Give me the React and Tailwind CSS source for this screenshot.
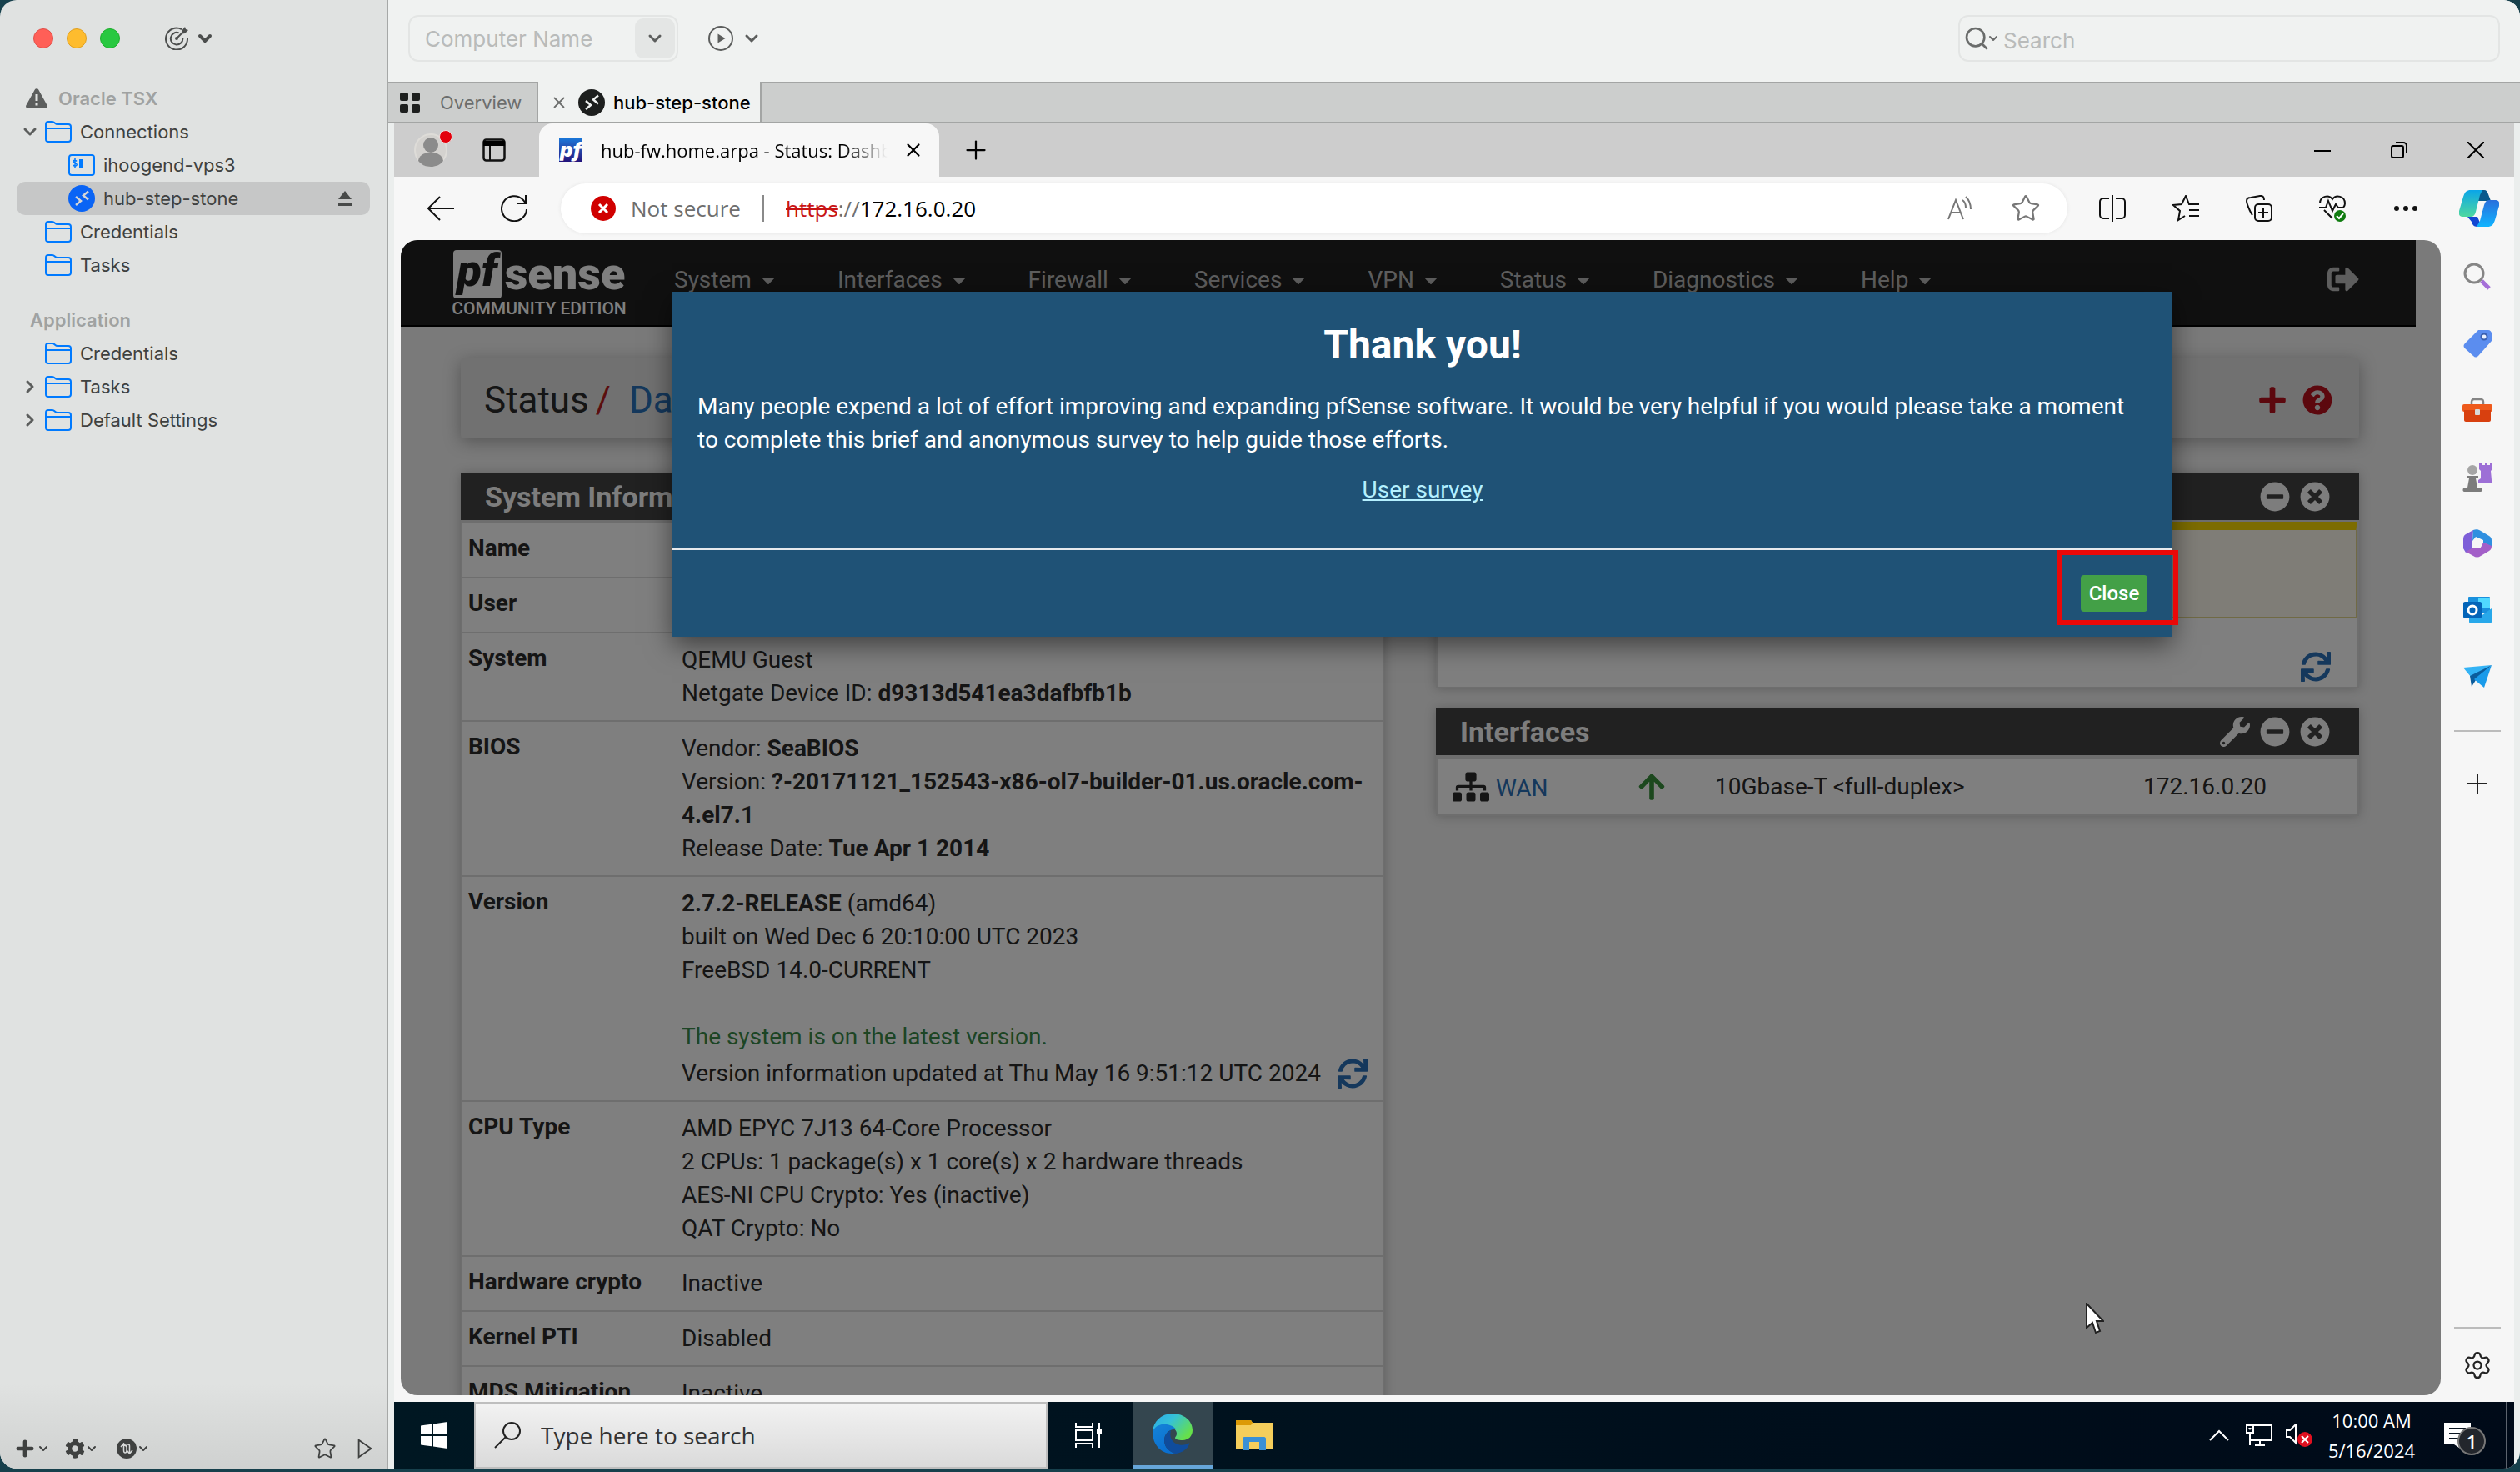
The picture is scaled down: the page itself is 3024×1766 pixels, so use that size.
import { useState } from 'react';
import {
  FaArrowUp,
  FaCaretDown,
  FaCog,
  FaMinusCircle,
  FaPlus,
  FaQuestionCircle,
  FaSignOutAlt,
  FaSitemap,
  FaSync,
  FaTimesCircle,
  FaWrench,
} from 'react-icons/fa';
import { ChevronDown, ChevronRight, Plus, Search, Settings, Star, X } from 'lucide-react';

const navItems = ['System', 'Interfaces', 'Firewall', 'Services', 'VPN', 'Status', 'Diagnostics', 'Help'];

const systemRows = [
  { label: 'Name', value: '' },
  { label: 'User', value: '' },
  {
    label: 'System',
    value: (
      <>
        QEMU Guest
        <br />
        Netgate Device ID: <b>d9313d541ea3dafbfb1b</b>
      </>
    ),
  },
  {
    label: 'BIOS',
    value: (
      <>
        Vendor: <b>SeaBIOS</b>
        <br />
        Version: <b>?-20171121_152543-x86-ol7-builder-01.us.oracle.com-4.el7.1</b>
        <br />
        Release Date: <b>Tue Apr 1 2014</b>
      </>
    ),
  },
  {
    label: 'Version',
    value: (
      <>
        <b>2.7.2-RELEASE</b> (amd64)
        <br />
        built on Wed Dec 6 20:10:00 UTC 2023
        <br />
        FreeBSD 14.0-CURRENT
        <br />
        <br />
        <span className="text-[#3a8a48]">The system is on the latest version.</span>
        <div className="flex h-11 items-center justify-between pt-1 pr-[10px]">
          <span className="whitespace-nowrap">Version information updated at Thu May 16 9:51:12 UTC 2024</span>
          <a href="#refresh" aria-label="Refresh" className="text-[#2a70b8]">
            <FaSync className="size-9" />
          </a>
        </div>
      </>
    ),
  },
  {
    label: 'CPU Type',
    value: (
      <>
        AMD EPYC 7J13 64-Core Processor
        <br />2 CPUs: 1 package(s) x 1 core(s) x 2 hardware threads
        <br />
        AES-NI CPU Crypto: Yes (inactive)
        <br />
        QAT Crypto: No
      </>
    ),
  },
  { label: 'Hardware crypto', value: 'Inactive' },
  { label: 'Kernel PTI', value: 'Disabled' },
  { label: 'MDS Mitigation', value: 'Inactive' },
];

function FolderIcon() {
  return (
    <svg viewBox="0 0 32 26" className="h-[26px] w-8" fill="none" stroke="#007aff" strokeWidth="2">
      <path d="M1 22V4a3 3 0 0 1 3-3h5c1.500 0 2 .8 3 1.700S13.500 4 15 4h13a3 3 0 0 1 3 3v15a3 3 0 0 1-3 3H4a3 3 0 0 1-3-3z" />
      <path d="M1 9h30" />
    </svg>
  );
}

function TerminalIcon() {
  return (
    <svg viewBox="0 0 32 26" className="h-[26px] w-8" fill="none" stroke="#007aff" strokeWidth="2">
      <rect x="1" y="1" width="30" height="24" rx="3" />
      <path d="M10 8.500C9 6.800 5.800 7 6 9s4 1.400 4.200 3.400S6.800 14.400 5.700 13M8 5v12" strokeWidth="1.500" />
      <path d="M13 6h5v11h-5z" fill="#007aff" stroke="none" />
    </svg>
  );
}

function RdpIcon({ circle, mark }) {
  return (
    <svg viewBox="0 0 32 32" className="size-8">
      <circle cx="16" cy="16" r="16" fill={circle} />
      <path d="M9 14l6 5-6 5M24 7.500l-6 5 6 5" fill="none" stroke={mark} strokeWidth="2.500" />
    </svg>
  );
}

function SidebarRow({ icon, label, arrow, nested, selected }) {
  return (
    <li
      className={
        selected
          ? 'mx-5 flex h-10 items-center rounded-[10px] bg-[#c6c7c7] pr-[22px] pl-2'
          : 'mx-5 flex h-10 items-center pl-2'
      }
    >
      <span className="flex w-[26px] shrink-0 text-[#5c5e5d]">
        {arrow === 'down' && <ChevronDown className="-ml-1 size-6" strokeWidth={3} />}
        {arrow === 'right' && <ChevronRight className="-ml-1 size-6" strokeWidth={3} />}
      </span>
      {nested && <span className="w-7 shrink-0" />}
      {icon}
      <span className="ml-[10px] flex-1">{label}</span>
      {selected && (
        <button aria-label="Disconnect">
          <svg viewBox="0 0 16 18" className="h-[18px] w-4" fill="#484a49">
            <path d="M8 0l8 10H0zM0 14h16v4H0z" />
          </svg>
        </button>
      )}
    </li>
  );
}

function Sidebar() {
  return (
    <aside className="flex w-[466px] shrink-0 flex-col border-r-2 border-[#a6a8a7] bg-[#e0e2e1] text-[22px] text-[#3f4140]">
      <div className="flex h-[98px] shrink-0 items-center gap-4 pb-[6px] pl-10">
        <button aria-label="Close window" className="size-6 rounded-full border border-[#e0504a] bg-[#ff5f57]" />
        <button aria-label="Minimise window" className="size-6 rounded-full border border-[#dfa023] bg-[#febc2e]" />
        <button aria-label="Zoom window" className="size-6 rounded-full border border-[#1dad2b] bg-[#28c840]" />
        <button aria-label="Activity" className="ml-[38px] flex items-center gap-2 text-[#4c4e4d]">
          <svg viewBox="0 0 28 28" className="size-7" fill="none" stroke="currentColor" strokeWidth="2">
            <path d="M20 3A13 13 0 1 0 27 14M16.500 7.300A7.300 7.300 0 1 0 21.400 14" />
            <path d="M14 14l8-8" />
            <path d="M20 5l4-5 1 3 3 1-4 4-3.500.5z" fill="currentColor" stroke="none" />
            <circle cx="14" cy="14" r="2" fill="currentColor" stroke="none" />
          </svg>
          <ChevronDown className="size-6" strokeWidth={4} />
        </button>
      </div>
      <h2 className="flex h-10 items-center gap-[13px] pl-[31px] font-semibold text-[#a0a2a1]">
        <svg viewBox="0 0 26 24" className="h-6 w-[26px]">
          <path d="M10.800 1.500a2.500 2.500 0 0 1 4.400 0l10.400 18.700a2.500 2.500 0 0 1-2.200 3.700H2.600a2.500 2.500 0 0 1-2.200-3.700z" fill="#5c5e5d" />
          <path d="M13 7v8M13 18v2.500" stroke="#e0e2e1" strokeWidth="3" />
        </svg>
        Oracle TSX
      </h2>
      <ul>
        <SidebarRow arrow="down" icon={<FolderIcon />} label="Connections" />
        <SidebarRow nested icon={<TerminalIcon />} label="ihoogend-vps3" />
        <SidebarRow nested selected icon={<RdpIcon circle="#0a64f5" mark="#d5d6d6" />} label="hub-step-stone" />
        <SidebarRow icon={<FolderIcon />} label="Credentials" />
        <SidebarRow icon={<FolderIcon />} label="Tasks" />
      </ul>
      <h2 className="mt-[26px] flex h-10 items-center pl-9 font-semibold text-[#a0a2a1]">Application</h2>
      <ul>
        <SidebarRow icon={<FolderIcon />} label="Credentials" />
        <SidebarRow arrow="right" icon={<FolderIcon />} label="Tasks" />
        <SidebarRow arrow="right" icon={<FolderIcon />} label="Default Settings" />
      </ul>
      <div className="mt-auto flex items-center bg-linear-to-b from-[#e0e2e1] to-[#cfd1d0] px-4 pt-16 pb-[10px] text-[#3f4140]">
        <button aria-label="Add" className="flex w-[62px] items-center">
          <Plus className="size-7" strokeWidth={4} />
          <ChevronDown className="size-4" strokeWidth={3} />
        </button>
        <button aria-label="Actions" className="flex w-[62px] items-center">
          <FaCog className="size-6" />
          <ChevronDown className="size-4" strokeWidth={3} />
        </button>
        <button aria-label="Sync" className="flex items-center">
          <svg viewBox="0 0 24 24" className="size-6">
            <circle cx="12" cy="12" r="12" fill="currentColor" />
            <path d="M5 10l3.500-4L12 10M8.500 6v8c0 4 3.500 4 3.500 0V9c0-3 3.500-3 3.500 0v9M12 14l3.500 4 3.500-4" fill="none" stroke="#d6d8d7" strokeWidth="1.500" />
          </svg>
          <ChevronDown className="size-4" strokeWidth={3} />
        </button>
        <button aria-label="Favourite" className="ml-auto">
          <Star className="size-7" strokeWidth={1.500} />
        </button>
        <button aria-label="Run" className="ml-5">
          <svg viewBox="0 0 20 26" className="ml-1 h-6 w-5" fill="none" stroke="currentColor" strokeWidth="2">
            <path d="M2 2l16 11L2 24z" />
          </svg>
        </button>
      </div>
    </aside>
  );
}

function Toolbar() {
  return (
    <div className="flex h-[98px] shrink-0 items-center bg-[#f0f2f1] pr-6 pb-[6px] pl-6 text-[26px]">
      <div className="flex h-14 w-[324px] items-center rounded-[12px] border-2 border-[#e3e5e4] pr-[2px]">
        <input
          aria-label="Computer Name"
          placeholder="Computer Name"
          className="w-0 flex-1 pl-[18px] outline-none placeholder:text-[#b9bbba]"
        />
        <button aria-label="Recent computers" className="flex h-12 w-12 items-center justify-center rounded-[10px] bg-[#e4e6e5]">
          <ChevronDown className="size-6 text-[#5c5e5d]" strokeWidth={3} />
        </button>
      </div>
      <button aria-label="Connect" className="ml-9 flex items-center gap-[10px] text-[#5c5e5d]">
        <svg viewBox="0 0 30 30" className="size-[30px]" fill="none" stroke="currentColor" strokeWidth="2">
          <circle cx="15" cy="15" r="14" />
          <path d="M11.500 9.500l9 5.500-9 5.500z" fill="currentColor" stroke="none" />
        </svg>
        <ChevronDown className="size-6" strokeWidth={3} />
      </button>
      <label className="ml-auto flex h-14 w-[650px] items-center rounded-[12px] border-2 border-[#e3e5e4] pl-1">
        <Search className="size-8 text-[#6a6c6b]" strokeWidth={2} />
        <ChevronDown className="-ml-1 size-4 text-[#6a6c6b]" strokeWidth={3} />
        <input aria-label="Search" placeholder="Search" className="mt-1 ml-1 flex-1 outline-none placeholder:text-[#b9bbba]" />
      </label>
    </div>
  );
}

function SessionTabs() {
  return (
    <div className="flex h-[50px] shrink-0 border-y-2 border-[#a3a5a4] bg-[#cccecd] text-[22px]">
      <button className="flex w-[180px] items-center gap-6 border-r-2 border-[#a3a5a4] pl-[14px] text-[#6c6e6d]">
        <svg viewBox="0 0 24 24" className="size-6" fill="#1d1f1e">
          <rect width="10" height="10" rx="2" />
          <rect x="14" width="10" height="10" rx="2" />
          <rect y="14" width="10" height="10" rx="2" />
          <rect x="14" y="14" width="10" height="10" rx="2" />
        </svg>
        Overview
      </button>
      <div className="-mt-[2px] flex w-[268px] items-center border-r-2 border-[#a3a5a4] bg-[#f0f2f1] pt-[2px] pl-[14px] font-medium text-black">
        <button aria-label="Close tab">
          <X className="size-[22px] text-[#6c6e6d]" strokeWidth={2} />
        </button>
        <span className="mr-[10px] ml-3">
          <RdpIcon circle="#1d1f1e" mark="#f0f2f1" />
        </span>
        hub-step-stone
      </div>
    </div>
  );
}

function BrowserTitleBar() {
  return (
    <div className="flex h-16 shrink-0 items-center bg-[#cdcdcd]">
      <button aria-label="Profile" className="relative ml-6 size-10 overflow-visible">
        <svg viewBox="0 0 40 40" className="size-10">
          <circle cx="20" cy="20" r="19" fill="#d4d2cf" stroke="#dedcd8" strokeWidth="2" />
          <circle cx="20" cy="14" r="9" fill="#8b8b8b" />
          <path d="M5 33c1-7 7-10 15-10s14 3 15 10c-4 5-9 7-15 7s-11-2-15-7z" fill="#8b8b8b" />
        </svg>
        <span className="absolute -top-1 -right-[6px] size-4 rounded-full border border-[#efe0e0] bg-[#e3000b]" />
      </button>
      <button aria-label="Tab actions" className="ml-[42px]">
        <svg viewBox="0 0 28 28" className="size-7">
          <rect x="1.500" y="1.500" width="25" height="25" rx="3" fill="none" stroke="#111" strokeWidth="2.500" />
          <path d="M1 3h26v6H1z" fill="#000" />
          <path d="M9 9v18" stroke="#111" strokeWidth="2" />
        </svg>
      </button>
      <div className="ml-10 flex h-full w-[480px] items-center rounded-t-[16px] bg-[#f7f7f7] pl-6">
        <span className="flex size-7 shrink-0 items-center justify-center bg-linear-to-b from-[#1976d8] to-[#22127c] text-[24px] leading-7 font-black text-white italic">
          pf
        </span>
        <span className="ml-[22px] w-[344px] overflow-hidden mask-r-from-85% font-['Open_Sans','Noto_Sans',sans-serif] text-[22px] whitespace-nowrap text-black">
          hub-fw.home.arpa - Status: Dashboard
        </span>
        <button aria-label="Close tab" className="ml-[18px]">
          <X className="size-[26px]" strokeWidth={2} />
        </button>
      </div>
      <button aria-label="New tab" className="ml-[26px]">
        <Plus className="size-9" strokeWidth={1.500} />
      </button>
      <div className="ml-auto flex">
        <button aria-label="Minimise" className="flex w-23 items-center justify-center">
          <svg viewBox="0 0 20 20" className="size-5" stroke="#000" strokeWidth="2">
            <path d="M0 11h20" />
          </svg>
        </button>
        <button aria-label="Restore" className="flex w-23 items-center justify-center">
          <svg viewBox="0 0 20 20" className="size-5" fill="none" stroke="#000" strokeWidth="2">
            <rect x="1" y="5" width="14" height="14" rx="2" />
            <path d="M6 1h9a4 4 0 0 1 4 4v9" />
          </svg>
        </button>
        <button aria-label="Close" className="flex w-23 items-center justify-center">
          <svg viewBox="0 0 20 20" className="size-5" stroke="#000" strokeWidth="2">
            <path d="M0 0l20 20M20 0L0 20" />
          </svg>
        </button>
      </div>
    </div>
  );
}

function AddressBar() {
  return (
    <div className="flex h-[76px] shrink-0 items-center bg-[#f7f7f7] font-['Open_Sans','Noto_Sans',sans-serif] text-[26px]">
      <button aria-label="Back" className="ml-10">
        <svg viewBox="0 0 32 32" className="size-8" fill="none" stroke="#111" strokeWidth="2">
          <path d="M15 2L1 16l14 14M1 16h31" />
        </svg>
      </button>
      <button aria-label="Reload" className="ml-14">
        <svg viewBox="0 0 32 32" className="size-8" fill="none" stroke="#111" strokeWidth="2">
          <path d="M31 17A15 15 0 1 1 27 6l3 4M30 0v10H20" />
        </svg>
      </button>
      <div className="ml-10 flex h-[60px] flex-1 items-center rounded-full bg-white pr-8 pl-9 shadow-[0_0_4px_#e4e4e4]">
        <svg viewBox="0 0 30 30" className="size-[30px] shrink-0">
          <circle cx="15" cy="15" r="15" fill="#d00000" />
          <path d="M10 10l10 10M20 10L10 20" stroke="#fff" strokeWidth="3" />
        </svg>
        <span className="ml-[18px] w-[140px] text-[#6e6e6e]">Not secure</span>
        <span className="ml-[18px] h-8 w-[2px] bg-[#8a8a8a]" />
        <span className="ml-[26px] text-black">
          <span className="text-[#c81414] line-through decoration-2">https</span>
          <span className="text-[#707070]">://</span>
          172.16.0.20
        </span>
        <div className="ml-auto flex items-center gap-[46px] text-[#777]">
          <button aria-label="Read aloud">
            <svg viewBox="0 0 30 30" className="size-[30px]" fill="none" stroke="currentColor" strokeWidth="2">
              <path d="M1 28L10 5l9 23M4 20h12M18 5c3 2 4 5 4 9M22 1c4 4 6 8 6 15" />
            </svg>
          </button>
          <button aria-label="Add to favourites">
            <Star className="size-9" strokeWidth={1.500} />
          </button>
        </div>
      </div>
      <div className="ml-[10px] -mr-[2px] flex text-[#111]">
        <button aria-label="Split screen" className="flex w-22 items-center justify-center">
          <svg viewBox="0 0 32 32" className="size-8" fill="none" stroke="currentColor" strokeWidth="2">
            <path d="M12 4H5a4 4 0 0 0-4 4v16a4 4 0 0 0 4 4h7M20 4h7a4 4 0 0 1 4 4v16a4 4 0 0 1-4 4h-7M16 0v32" />
          </svg>
        </button>
        <button aria-label="Favourites" className="flex w-22 items-center justify-center">
          <svg viewBox="0 0 32 32" className="size-8" fill="none" stroke="currentColor" strokeWidth="2">
            <path d="M23 11h-3L16 1l-5 10-10 1 8 7-2 11 8-5M21 11h11M20 18h12M20 25h12" />
          </svg>
        </button>
        <button aria-label="Collections" className="flex w-22 items-center justify-center">
          <svg viewBox="0 0 32 32" className="size-8" fill="none" stroke="currentColor" strokeWidth="2">
            <path d="M8 24C5 20 1 10 1 7s2-4 5-4l11-2c3-.5 5 1 5 5" />
            <rect x="11" y="11" width="20" height="20" rx="4" />
            <path d="M21 15v12M15 21h12" />
          </svg>
        </button>
        <button aria-label="Browser essentials" className="flex w-22 items-center justify-center">
          <svg viewBox="0 0 32 32" className="size-8" fill="none" stroke="currentColor" strokeWidth="2">
            <path d="M1 10C1 1 12-1 16 5c4-6 15-4 15 5 0 3-1 4-2 5h-6l-3-4-4 8-5-12-3 8H0M6 18l10 10" />
            <circle cx="25" cy="25" r="7" fill="#107c10" stroke="none" />
            <path d="M21 25l3 3 5-6" stroke="#fff" />
          </svg>
        </button>
        <button aria-label="More" className="flex w-22 items-center justify-center">
          <svg viewBox="0 0 28 6" className="h-[6px] w-7" fill="currentColor">
            <circle cx="3" cy="3" r="3" />
            <circle cx="14" cy="3" r="3" />
            <circle cx="25" cy="3" r="3" />
          </svg>
        </button>
        <button aria-label="Copilot" className="flex w-22 items-center justify-center">
          <svg viewBox="0 0 48 44" className="h-11 w-12">
            <defs>
              <linearGradient id="copA" x1="0" y1="0" x2="0" y2="1">
                <stop offset="0" stopColor="#0aa5e8" />
                <stop offset="1" stopColor="#4fd8a0" />
              </linearGradient>
              <linearGradient id="copB" x1="0" y1="0" x2="0" y2="1">
                <stop offset="0" stopColor="#2a6fdc" />
                <stop offset="1" stopColor="#10b4ff" />
              </linearGradient>
            </defs>
            <path d="M24 0h6c3 0 4 2 5 5l3 8h-6l-9 0z" fill="#0a5a8c" />
            <path d="M10 32h12l5 12h-4c-4 0-7-1-8-6z" fill="#1346d2" />
            <path d="M14 0h14l-3 6-5 20c-1 4-3 6-6 6H4c-3 0-5-2-4-7L5 8c2-6 4-8 9-8z" fill="url(#copA)" />
            <path d="M34 44H21l4-7 5-19c1-4 3-6 6-6h8c3 0 5 2 4 7l-5 17c-2 6-4 8-9 8z" fill="url(#copB)" />
          </svg>
        </button>
      </div>
    </div>
  );
}

function PfNavbar() {
  return (
    <nav className="flex h-[104px] items-start border-b-2 border-black bg-[#212121] pr-[68px] pl-[60px]">
      <a href="#home" className="flex w-[212px] shrink-0 flex-col items-center pt-3 text-white">
        <span className="flex items-center gap-1">
          <span className="flex h-[58px] w-[58px] items-center justify-center rounded-[4px] bg-white pb-2 text-[54px] leading-none font-black text-[#212121] italic">
            pf
          </span>
          <span className="text-[54px] leading-[58px] font-black">sense</span>
        </span>
        <span className="text-[21px] leading-6 font-medium whitespace-nowrap">COMMUNITY EDITION</span>
      </a>
      <ul className="ml-14 flex gap-[71px] pt-7 text-[#bdbdbd]">
        {navItems.map((item) => (
          <li key={item}>
            <a href={`#${item}`} className="flex items-center gap-2">
              {item}
              <FaCaretDown className="size-6" />
            </a>
          </li>
        ))}
      </ul>
      <a href="#logout" aria-label="Logout" className="ml-auto pt-7 text-[#bdbdbd]">
        <FaSignOutAlt className="size-[38px]" />
      </a>
    </nav>
  );
}

function PanelTitle({ title, config }) {
  return (
    <h2 className="flex h-14 items-center justify-end gap-3 bg-[#424242] pr-[35px] pl-[33px] text-[34px] font-bold text-[#fafafa]">
      <span className="-ml-1 flex-1">{title}</span>
      {config && (
        <button aria-label="Configure">
          <FaWrench className="size-9" />
        </button>
      )}
      <button aria-label="Collapse">
        <FaMinusCircle className="size-9" />
      </button>
      <button aria-label="Remove">
        <FaTimesCircle className="size-9" />
      </button>
    </h2>
  );
}

function SystemInformation() {
  return (
    <section className="min-w-0 flex-1 shadow-[0_0_12px_#bbb]">
      <PanelTitle title="System Information" />
      <table className="w-full table-fixed border-2 border-t-4 border-[#dcdcdc] bg-white text-left">
        <tbody>
          {systemRows.map((row) => (
            <tr key={row.label} className="border-b-2 border-[#dcdcdc] align-top">
              <th scope="row" className="w-[256px] px-[7px] pt-[10px] pb-[14px] font-bold">
                {row.label}
              </th>
              <td className="px-2 py-3">{row.value}</td>
            </tr>
          ))}
        </tbody>
      </table>
    </section>
  );
}

function InterfacesPanel() {
  return (
    <section className="shadow-[0_0_12px_#bbb]">
      <PanelTitle title="Interfaces" config />
      <table className="w-full border-2 border-t-4 border-[#dcdcdc] bg-white">
        <tbody>
          <tr>
            <td className="h-[70px] w-[220px] pl-[18px]">
              <span className="flex items-center gap-2">
                <FaSitemap className="size-11" />
                <a href="#wan" className="pt-1 text-[#2a70b8]">
                  WAN
                </a>
              </span>
            </td>
            <td className="w-[114px] pl-5">
              <FaArrowUp className="size-9 text-[#38903c]" title="up" />
            </td>
            <td>10Gbase-T &lt;full-duplex&gt;</td>
            <td className="w-[258px]">172.16.0.20</td>
          </tr>
        </tbody>
      </table>
    </section>
  );
}

function SurveyModal({ onClose }) {
  return (
    <div className="absolute inset-0 flex items-start justify-center bg-black/50 pt-[62px] pl-1">
      <div role="dialog" aria-labelledby="survey-title" className="w-full max-w-[1800px] bg-[#1f5276] text-white shadow-[0_10px_30px_rgba(0,0,0,0.5)]">
        <div className="h-[308px] px-[30px] pt-8">
          <h1 id="survey-title" className="mb-[22px] text-center text-[48px] leading-[64px] font-bold">
            Thank you!
          </h1>
          <p className="mb-5">
            Many people expend a lot of effort improving and expanding pfSense software. It would be very helpful if you
            would please take a moment to complete this brief and anonymous survey to help guide those efforts.
          </p>
          <p className="text-center">
            <a href="#survey" className="text-[#b5f0ff] underline">
              User survey
            </a>
          </p>
        </div>
        <div className="flex h-[106px] items-start justify-end border-t-2 border-[#e6e9ec] pr-[30px]">
          <span className="relative mt-[30px] flex">
            <button onClick={onClose} className="h-11 w-20 rounded-[4px] bg-[#43a047] text-2xl font-medium">
              Close
            </button>
            <span className="pointer-events-none absolute -top-[30px] -right-[37px] h-[90px] w-[145px] border-6 border-[#ea0808]" />
          </span>
        </div>
      </div>
    </div>
  );
}

function PfSensePage() {
  const [showSurvey, setShowSurvey] = useState(true);

  return (
    <main className="relative min-h-0 flex-1 overflow-hidden rounded-[20px] bg-[#f4f4f4] pr-[30px] font-[Roboto,sans-serif] text-[28px] leading-10 text-[#2b2b2b]">
      <PfNavbar />
      <div className="pr-[68px] pl-[72px]">
        <header className="mt-[38px] flex h-24 items-center rounded-[4px] bg-[#e2e2e2] px-8 pt-1 text-[44px] shadow-[0_4px_20px_#aaa]">
          <span className="-ml-1">Status</span>
          <span className="mx-2 text-[#b71c1c]">/</span>
          <a href="#dashboard" className="ml-[14px] text-[#2a70b8]">
            Dashboard
          </a>
          <span className="ml-auto flex gap-[18px] text-[#b8101c]">
            <button aria-label="Add widget">
              <FaPlus className="size-9" />
            </button>
            <button aria-label="Help">
              <FaQuestionCircle className="size-9" />
            </button>
          </span>
        </header>
        <div className="mt-[42px] flex items-start gap-[62px]">
          <SystemInformation />
          <div className="min-w-0 flex-1">
            <section className="shadow-[0_0_12px_#bbb]">
              <PanelTitle title="" />
              <div className="h-[202px] border-2 border-[#dcdcdc] bg-white">
                <div className="h-[116px] border-t-10 border-r-2 border-b-2 border-r-[#e0d48a] border-b-[#e0d48a] border-t-[#f8d800] bg-[#fffbee]" />
                <div className="flex justify-end pt-10 pr-8">
                  <a href="#refresh" aria-label="Refresh" className="text-[#2a70b8]">
                    <FaSync className="size-9" />
                  </a>
                </div>
              </div>
            </section>
            <div className="mt-6">
              <InterfacesPanel />
            </div>
          </div>
        </div>
      </div>
      {showSurvey && <SurveyModal onClose={() => setShowSurvey(false)} />}
      <svg viewBox="0 0 22 38" className="absolute right-[404px] bottom-[73px] h-[38px] w-[22px]">
        <path d="M1 1v29l7-6 4 12 5-2-4-12h8z" fill="#fff" stroke="#222" strokeWidth="2" />
      </svg>
    </main>
  );
}

function EdgeSidebar() {
  return (
    <aside className="flex w-22 shrink-0 flex-col items-center bg-[#f6f6f6] pt-1 pb-3 *:shrink-0">
      <button aria-label="Search" className="flex h-20 items-center">
        <svg viewBox="0 0 34 34" className="size-[34px]" fill="none">
          <circle cx="13" cy="13" r="11" stroke="#858585" strokeWidth="3" />
          <path d="M22 22l9 9" stroke="#a56fd8" strokeWidth="5" />
        </svg>
      </button>
      <button aria-label="Shopping" className="flex h-20 items-center">
        <svg viewBox="0 0 34 34" className="size-[34px]">
          <path d="M18 1h12c2 0 4 2 4 4v9L18 32c-2 2-4 2-6 0l-10-9c-2-2-2-4 0-6z" fill="#5b8def" />
          <circle cx="25" cy="9" r="3.500" fill="#e9f0ff" stroke="#3a5fb0" strokeWidth="2" />
        </svg>
      </button>
      <button aria-label="Tools" className="flex h-20 items-center">
        <svg viewBox="0 0 36 28" className="h-7 w-9">
          <path d="M11 8V4c0-2 1-3 3-3h8c2 0 3 1 3 3v4" fill="none" stroke="#858585" strokeWidth="2.500" />
          <rect y="7" width="36" height="9" rx="2" fill="#ee5a1c" />
          <path d="M2 14h32v12c0 1-1 2-2 2H4c-1 0-2-1-2-2z" fill="#d8400f" />
          <rect x="15" y="13" width="6" height="7" rx="1" fill="#d8d8d8" />
        </svg>
      </button>
      <button aria-label="Games" className="flex h-20 items-center">
        <svg viewBox="0 0 36 36" className="size-9">
          <path d="M20 1h3v3h4V1h3v3h3V1h3v8l-2 2 1 11h2v4H19v-4l3-2 0-9-2-2z" fill="#9d6fd6" />
          <circle cx="12" cy="10" r="6" fill="#a5a5a5" />
          <path d="M5 17h14v3h-3l2 11h4c2 1 2 5 0 5H2c-2 0-2-4 0-5h4l2-11H5z" fill="#7c7c7c" />
        </svg>
      </button>
      <button aria-label="Microsoft 365" className="flex h-20 items-center">
        <svg viewBox="0 0 34 34" className="size-[34px]">
          <path d="M12 1L3 6C1 7 0 9 0 12v11l3 5 8-4V14z" fill="#7d5fd8" />
          <path d="M12 1c3-1 6-1 9 1l10 6c2 1 3 3 3 5v8l-10-5v-3l-9-4-4 5z" fill="#2f8fe0" />
          <path d="M34 20c0 3-1 5-3 6l-10 6c-3 2-6 2-9 0l-9-5 9-5 4 1 9-7z" fill="#a35fc8" />
          <circle cx="17" cy="17" r="6" fill="#f6f6f6" />
        </svg>
      </button>
      <button aria-label="Outlook" className="flex h-20 items-center">
        <svg viewBox="0 0 34 32" className="h-8 w-[34px]">
          <rect x="6" width="26" height="20" rx="1" fill="#1a90dd" />
          <rect x="18" y="2" width="14" height="12" fill="#50d9ff" />
          <path d="M7 18l13 6 14-10v16c0 1-1 2-2 2H9c-1 0-2-1-2-2z" fill="#28a8ea" />
          <rect y="6" width="22" height="20" rx="2" fill="#0364b8" />
          <circle cx="11" cy="16" r="5" fill="none" stroke="#fff" strokeWidth="3" />
        </svg>
      </button>
      <button aria-label="Drop" className="flex h-20 items-center">
        <svg viewBox="0 0 34 28" className="h-7 w-[34px]">
          <path d="M0 3L34 0 9 14z" fill="#33b3f5" />
          <path d="M34 0L8 13l2 13 5-8z" fill="#0b5c9c" />
          <path d="M34 0L13 17l12 10z" fill="#1a9bea" />
        </svg>
      </button>
      <span className="mt-6 h-[2px] w-14 bg-[#bcbcbc]" />
      <button aria-label="Add" className="mt-[50px]">
        <svg viewBox="0 0 24 24" className="size-6" stroke="#222" strokeWidth="2">
          <path d="M12 0v24M0 12h24" />
        </svg>
      </button>
      <span className="mt-auto h-[2px] w-14 bg-[#bcbcbc]" />
      <button aria-label="Settings" className="mt-[26px] mb-[14px]">
        <Settings className="size-9 text-[#222]" strokeWidth={1.500} />
      </button>
    </aside>
  );
}

function Taskbar() {
  return (
    <footer className="flex h-20 shrink-0 bg-linear-to-r from-[#001722] to-[#000a18] font-['Open_Sans','Noto_Sans',sans-serif] text-white">
      <button aria-label="Start" className="flex w-24 items-center justify-center">
        <svg viewBox="0 0 32 32" className="size-8" fill="#fff">
          <path d="M0 4.500L13 2.800V15H0zM15 2.500L32 0v15H15zM0 17h13v12.200L0 27.500zM15 17h17v15l-17-2.500z" />
        </svg>
      </button>
      <label className="flex w-[688px] items-center border-2 border-[#bebebe] bg-linear-to-b from-[#f2f2f2] to-[#dadada] pl-[22px]">
        <svg viewBox="0 0 32 32" className="size-8" fill="none" stroke="#222" strokeWidth="2">
          <circle cx="21" cy="11" r="10" />
          <path d="M14 18L1 31" />
        </svg>
        <input
          aria-label="Type here to search"
          placeholder="Type here to search"
          className="ml-6 flex-1 text-[28px] outline-none placeholder:text-[#333]"
        />
      </label>
      <button aria-label="Task view" className="flex w-[102px] items-center justify-center pr-1">
        <svg viewBox="0 0 32 30" className="h-[30px] w-8" fill="none" stroke="#fff" strokeWidth="2">
          <path d="M1 0v5h20V0M1 30v-5h20v5M1 9h20v12H1zM29 0v30" />
          <path d="M26 8h6v6h-6z" fill="#fff" stroke="none" />
        </svg>
      </button>
      <button aria-label="Microsoft Edge" className="flex w-24 items-center justify-center border-b-4 border-[#66a6d9] bg-[#34464f]">
        <svg viewBox="0 0 48 48" className="size-12">
          <defs>
            <linearGradient id="edgeTop" x1="0" y1="0" x2="1" y2="0.600">
              <stop offset="0" stopColor="#2aa8e8" />
              <stop offset="0.450" stopColor="#35c1d8" />
              <stop offset="1" stopColor="#66e04a" />
            </linearGradient>
            <linearGradient id="edgeLeft" x1="0" y1="0" x2="0.500" y2="1">
              <stop offset="0" stopColor="#1583d8" />
              <stop offset="1" stopColor="#0a6fd0" />
            </linearGradient>
          </defs>
          <path d="M0 22C1 9 11 0 24 0c14 0 24 9 24 20 0 7-5 12-12 12-5 0-9-1-9-3 0-1 2-2 2-5 0-4-4-8-10-8C10 14 3 16 0 22z" fill="url(#edgeTop)" />
          <path d="M0 22c3-8 11-10 17-9 7 1 11 5 11 6-8-1-14 5-14 13 0 9 7 15 15 16-2 0-4 0-6 0C10 48 0 37 0 22z" fill="url(#edgeLeft)" />
          <path d="M22 20c-6 3-8 8-8 12 0 9 7 15 14 16 8-1 14-6 16-11 1-1 0-2-1-1-10 5-25-1-21-16z" fill="#0f4c9c" />
        </svg>
      </button>
      <button aria-label="File Explorer" className="flex w-24 items-center justify-center pl-1">
        <svg viewBox="0 0 44 36" className="h-9 w-11">
          <path d="M0 0h18l2 3h24v31H0z" fill="#f5ce5b" />
          <path d="M0 0h18l2 3-2 3H0z" fill="#dc9a06" />
          <path d="M8 36V22c0-1 1-2 2-2h24c1 0 2 1 2 2v14h-8V26H16v10z" fill="#3a90d6" />
        </svg>
      </button>
      <div className="ml-auto flex items-center">
        <button aria-label="Show hidden icons">
          <svg viewBox="0 0 24 14" className="h-[14px] w-6" fill="none" stroke="#fff" strokeWidth="2">
            <path d="M1 13L12 2l11 11" />
          </svg>
        </button>
        <button aria-label="Network" className="ml-5">
          <svg viewBox="0 0 32 26" className="h-[26px] w-8" fill="none" stroke="#fff" strokeWidth="2">
            <path d="M10 1h21v18H6M1 1h8v9H1zM5 10v15M17 19v6M11 25h12" />
            <path d="M3 4h4l-2 3z" fill="#fff" stroke="none" />
          </svg>
        </button>
        <button aria-label="Volume" className="ml-4">
          <svg viewBox="0 0 32 28" className="h-7 w-8" fill="none" stroke="#fff" strokeWidth="2">
            <path d="M1 8h4l7-7v22l-7-7H1z" />
            <circle cx="23" cy="19" r="9" fill="#e01020" stroke="none" />
            <path d="M19 15l8 8M27 15l-8 8" />
          </svg>
        </button>
        <div className="ml-4 flex w-[110px] flex-col items-center text-[22px] leading-9 whitespace-nowrap">
          <span>10:00 AM</span>
          <span>5/16/2024</span>
        </div>
        <button aria-label="Notifications" className="relative ml-8 h-12 w-[50px]">
          <svg viewBox="0 0 32 30" className="h-[30px] w-8">
            <path d="M0 0h32v26H18v4l-6-4H0z" fill="#fff" />
            <path d="M6 7h20M6 13h20M6 19h12" stroke="#0a1420" strokeWidth="2" />
          </svg>
          <span className="absolute right-0 bottom-0 flex size-[34px] items-center justify-center rounded-full border-2 border-[#777] bg-[#23262c] text-[22px] font-semibold">
            1
          </span>
        </button>
        <span className="mr-2 ml-6 h-20 w-[2px] bg-[#5c636d]" />
      </div>
    </footer>
  );
}

export default function App() {
  return (
    <div className="h-screen bg-[#17404c] pb-1 font-[Inter,sans-serif]">
      <div className="flex h-full overflow-hidden rounded-[20px]">
        <Sidebar />
        <div className="flex min-w-0 flex-1 flex-col bg-[#ebeeed]">
          <Toolbar />
          <SessionTabs />
          <div className="mr-[7px] ml-[7px] flex min-h-0 flex-1 flex-col">
            <BrowserTitleBar />
            <AddressBar />
            <div className="flex min-h-0 flex-1 bg-[#f6f6f6]">
              <div className="flex min-w-0 flex-1 flex-col pb-2 pl-2">
                <PfSensePage />
              </div>
              <EdgeSidebar />
            </div>
            <Taskbar />
          </div>
        </div>
      </div>
    </div>
  );
}
